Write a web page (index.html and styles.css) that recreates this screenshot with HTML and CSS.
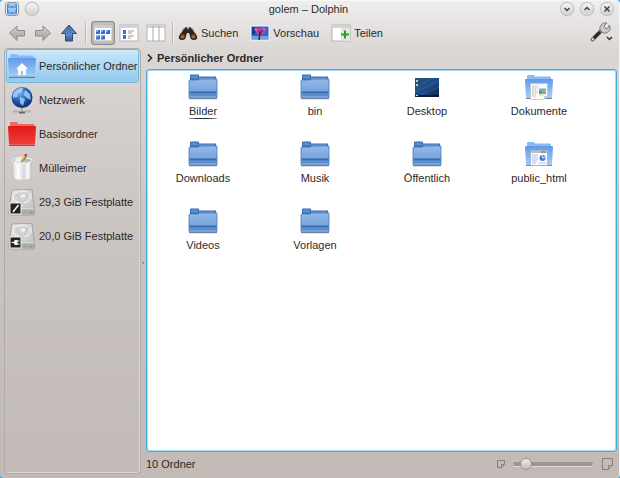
FILE: index.html
```html
<!DOCTYPE html>
<html lang="de">
<head>
<meta charset="utf-8">
<title>golem – Dolphin</title>
<link rel="stylesheet" href="styles.css">
</head>
<body>
<svg class="defs" aria-hidden="true">
  <defs>
    <linearGradient id="gFolder" x1="0" y1="0" x2="0" y2="1"><stop offset="0" stop-color="#92b9e8"/><stop offset="1" stop-color="#6b9ad8"/></linearGradient>
    <linearGradient id="gOpen" x1="0" y1="0" x2="0" y2="1"><stop offset="0" stop-color="#5f9aea"/><stop offset="1" stop-color="#a8ccf8"/></linearGradient>
    <linearGradient id="gRed" x1="0" y1="0" x2="0" y2="1"><stop offset="0" stop-color="#e01818"/><stop offset="1" stop-color="#f43c3c"/></linearGradient>
    <linearGradient id="gDesk" x1="0" y1="0" x2="1" y2="1"><stop offset="0" stop-color="#2a5070"/><stop offset=".5" stop-color="#1d4a86"/><stop offset="1" stop-color="#102848"/></linearGradient>
    <linearGradient id="gGrey" x1="0" y1="0" x2="0" y2="1"><stop offset="0" stop-color="#d2d0ce"/><stop offset="1" stop-color="#a3a19f"/></linearGradient>
    <linearGradient id="gUp" x1="0" y1="0" x2="0" y2="1"><stop offset="0" stop-color="#3e68a4"/><stop offset=".6" stop-color="#5f8ac4"/><stop offset="1" stop-color="#34588f"/></linearGradient>
    <linearGradient id="gCan" x1="0" y1="0" x2="1" y2="0"><stop offset="0" stop-color="#d4d4d4"/><stop offset=".3" stop-color="#fff"/><stop offset=".6" stop-color="#d6d7d8"/><stop offset=".8" stop-color="#fafafa"/><stop offset="1" stop-color="#c4c4c4"/></linearGradient>
    <linearGradient id="gDisk" x1="0" y1="0" x2="1" y2="1"><stop offset="0" stop-color="#e9e9e9"/><stop offset="1" stop-color="#bcbcbc"/></linearGradient>
    <radialGradient id="gGlobe" cx=".4" cy=".3" r=".7"><stop offset="0" stop-color="#7fb4ee"/><stop offset=".5" stop-color="#2863bb"/><stop offset="1" stop-color="#0b2c70"/></radialGradient>
  </defs>
  <symbol id="folder" viewBox="0 0 30 26">
    <path d="M1 24.500h28" stroke="#4c586c" stroke-width="1.500" opacity=".7"/>
    <path d="M2 1.500q0-1 1-1h7q1 0 1 1v1h16.500q.7 0 .7.700V8H2z" fill="#3868b2"/>
    <path d="M3 1.500h7v3H3z" fill="#5a8ed8"/>
    <path d="M11 3.500h16v1.500H11z" fill="#6d9cd6"/>
    <path d="M1 7q0-1 1-1h8l2-1h16q1 0 1 1v17q0 1-1 1H2q-1 0-1-1z" fill="url(#gFolder)" stroke="#4678b8" stroke-width=".8"/>
    <path d="M1.500 17.500h27v2h-27z" fill="#3668ac"/>
    <path d="M1.500 19.500h27v3h-27z" fill="#5b8dce"/>
    <path d="M2 23h26" stroke="#9abce9" stroke-width=".8"/>
  </symbol>
  <symbol id="folder-open" viewBox="0 0 30 26">
    <path d="M3 10V2q0-1 1-1h6l1 1.500h15q1 0 1 1V10z" fill="#8fbaf0"/>
    <path d="M1 6q0-1 1-1h26q1 0 1 1l-1 17q0 .7-1 .7H3q-1 0-1-.7z" fill="url(#gOpen)"/>
    <path d="M2 24.300h26" stroke="#536b90" stroke-width="1"/>
  </symbol>
  <symbol id="documents" viewBox="0 0 30 26">
    <use href="#folder-open" width="30" height="26"/>
    <path d="M6.500 9.500h17V22l-4 3.500h-13z" fill="#fbfbfa" stroke="#bbb" stroke-width=".6"/>
    <path d="M8 12h6M8 14h6M8 16h5M8 18h6M8 20h5M15 21h5M8 22h4" stroke="#b0b0b0" stroke-width=".8" stroke-dasharray="2 .5"/>
    <path d="M15 14.500h7v5h-7z" fill="#5eb0de"/><path d="M15 17.500h7v2h-7z" fill="#538b45"/><path d="M18 17h4v1.500h-4z" fill="#e7b23b"/>
    <path d="m19.500 25.500.5-3.500h3.500z" fill="#cfcfcf"/>
  </symbol>
  <symbol id="html" viewBox="0 0 30 26">
    <use href="#folder-open" width="30" height="26"/>
    <path d="M6.500 9.500h17v15h-17z" fill="#f7f9fb" stroke="#9cabb9" stroke-width=".7"/>
    <path d="M7 10h16v2H7z" fill="#b9c0c6"/><path d="M17 11h5" stroke="#555" stroke-width=".7"/>
    <path d="M8 14h6M8 16h5M8 18h6M8 20h5M8 22h4" stroke="#9ebbe8" stroke-width=".8"/>
    <circle cx="18.500" cy="17" r="3" fill="#3e82d8"/><path d="m18 14 .8 3 2.500-1" stroke="#e5f1ff" fill="none"/><path d="M15 22h7" stroke="#9ebbe8" stroke-width=".8"/>
  </symbol>
  <symbol id="desktop" viewBox="0 0 30 26">
    <path d="M3 4h24v19H3z" fill="url(#gDesk)"/><path d="m3 18 24-11M3 14 21 4M8 21 27 13" stroke="#4687c7" stroke-width="1" opacity=".35"/>
    <path d="M4 6h2v2H4zM4 10h2v2H4z" fill="#b5d4b4"/><path d="M3 21h24v2H3z" fill="#0c1c33"/><path d="M4 21.500h2" stroke="#bcdcf7"/>
  </symbol>
  <symbol id="disk" viewBox="0 0 28 28">
    <path d="m4 2 20-.5L26.500 21v5q0 1-1 1H2q-1 0-1-1v-5z" fill="url(#gDisk)" stroke="#999" stroke-width=".8"/>
    <path d="M1.500 21h25v5h-25z" fill="#aaa9a8"/><path d="M1.500 21h25" stroke="#eee" stroke-width=".7"/>
    <ellipse cx="14" cy="9" rx="9" ry="6" fill="#d6d6d6" stroke="#f8f8f8"/><path d="M8 6q4 5 6 10M20 4q-2 8-6 12" stroke="#bdbdbd" fill="none"/><ellipse cx="15" cy="8" rx="3" ry="2" fill="#f3f3f3" stroke="#bbb" stroke-width=".5"/>
    <path d="M22 24.500h2" stroke="#65a45b"/>
  </symbol>
</svg>

<div class="window">
  <header class="titlebar">
    <div class="title-side">
      <svg class="app-icon" viewBox="0 0 14 14"><rect x=".5" y=".5" width="13" height="13" rx="2" fill="#e5eef7" stroke="#969492"/><path d="M2.500 2v10M11.500 2v10" stroke="#3b84d0"/><path d="M3 1.500h8v5H3zM3 7.500h8v5H3z" fill="#5aa2e8"/><path d="M4.500 2.500h5v2h-5zM4.500 8.500h5v2h-5z" fill="#fff"/><path d="M5 4h4M5 10h4" stroke="#276dbd"/></svg>
      <button class="round" aria-label="Auf allen Arbeitsflächen"></button>
    </div>
    <h1 class="title">golem – Dolphin</h1>
    <div class="title-side title-end">
      <button class="round" aria-label="Minimieren"><svg viewBox="0 0 12 12"><path d="m3.500 5 2.500 2.500L8.500 5"/></svg></button>
      <button class="round" aria-label="Maximieren"><svg viewBox="0 0 12 12"><path d="M3.500 7 6 4.500 8.500 7"/></svg></button>
      <button class="round" aria-label="Schließen"><svg viewBox="0 0 12 12"><path d="m3.500 3.500 5 5m0-5-5 5"/></svg></button>
    </div>
  </header>

  <nav class="toolbar" aria-label="Werkzeugleiste">
    <button class="tool" aria-label="Zurück"><svg class="i18" viewBox="0 0 18 18"><path d="M1.500 9 9 2v4.500h7.500v5.500H9v4.500z" fill="url(#gGrey)" stroke="#8d8b89"/></svg></button>
    <button class="tool" aria-label="Vor"><svg class="i18" viewBox="0 0 18 18"><path d="M16.500 9 9 2v4.500H1.500v5.500H9v4.500z" fill="url(#gGrey)" stroke="#8d8b89"/></svg></button>
    <button class="tool" aria-label="Aufwärts"><svg class="i18" viewBox="0 0 18 18"><path d="M9 1 1.500 9.500h4V17h7V9.500h4z" fill="url(#gUp)" stroke="#294b80"/></svg></button>
    <span class="sep"></span>
    <button class="tool view active" aria-label="Symbole"><svg class="i20" viewBox="0 0 20 18"><rect x="1" y="1" width="18" height="16" fill="#fff" stroke="#b4b2b0"/><path d="M1 1h18v3H1z" fill="#cfcdcb"/><path d="M3 6h4v4H3zM8 6h4v4H8zM13 6h4v4h-4zM3 11.500h4v4H3zM8 11.500h4v4H8z" fill="#2f6fd2"/><path d="M3 6h2v2H3zM8 6h2v2H8zM13 6h2v2h-2zM3 11.500h2v2H3zM8 11.500h2v2H8z" fill="#75aaf2"/></svg></button>
    <button class="tool view" aria-label="Kompakt"><svg class="i20" viewBox="0 0 20 18"><rect x="1" y="1" width="18" height="16" fill="#fff" stroke="#b4b2b0"/><path d="M1 1h18v3H1z" fill="#d5d3d1"/><path d="M4 6h3v4H4zM4 11h3v4H4z" fill="#2f73d8"/><path d="M9 7h6M9 9h4M9 12h6M9 14h3" stroke="#999"/></svg></button>
    <button class="tool view" aria-label="Spalten"><svg class="i20" viewBox="0 0 20 18"><rect x="1" y="1" width="18" height="16" fill="#fff" stroke="#b4b2b0"/><path d="M1 1h18v3H1z" fill="#d5d3d1"/><path d="M7 2v15M13 2v15" stroke="#aaa"/></svg></button>
    <span class="sep"></span>
    <button class="tool text"><svg class="i20" viewBox="0 0 20 18"><path d="m6 4 3-1 1 3 1-3 3 1 5 8q1 4-3 4t-4-4l-1-3H9l-1 3q0 4-4 4t-3-4z" fill="#2b2725"/><path d="m5 6 2-2M15 6l-2-2M3 9l2-2M17 9l-2-2" stroke="#8b8785"/><circle cx="4.500" cy="12.500" r="2.300" fill="#8c4c18"/><circle cx="15.500" cy="12.500" r="2.300" fill="#8c4c18"/><path d="M3.500 13h2M14.500 13h2" stroke="#df8c32"/></svg>Suchen</button>
    <button class="tool text"><svg class="i20" viewBox="0 0 20 18"><rect x="1" y="2" width="18" height="14" fill="#2667c8" stroke="#f8f8f8"/><path d="M2 12h16v3H2z" fill="#69a3e8"/><path d="M2 3h5l-2 7-3 1z" fill="#123a8b"/><path d="M4 4q3-2 6 1 4-3 6 0-1 5-5 7Q6 10 4 4z" fill="#c9408f"/><path d="m7 5 3 2 4-2-3 6z" fill="#7a2aa0"/><path d="m10 8-1 8" stroke="#342b3b" stroke-width="1.500"/><path d="M13 5h2M5 6h2" stroke="#f59bbd"/></svg>Vorschau</button>
    <button class="tool text"><svg class="i20" viewBox="0 0 20 18"><rect x="1" y="1" width="18" height="16" fill="#fff" stroke="#b4b2b0"/><path d="M1 1h18v3H1z" fill="#d5d3d1"/><path d="M10 4h9v13h-9z" fill="#e5e4e3"/><path d="M14 6.500v8M10 10.500h8" stroke="#24a31c" stroke-width="2"/></svg>Teilen</button>
    <button class="tool settings" aria-label="Einstellungen"><svg class="wrench" viewBox="0 0 24 22"><path d="m2.500 17.500 9-9" stroke="#777" stroke-width="4" stroke-linecap="round"/><path d="m4 16 6-6" stroke="#262626" stroke-width="3"/><path d="M10 8q-1-5 4-7h3l-3 3 2 3 3-2v-2q3 4-1 7-3 2-5 1z" fill="#c9c9c9" stroke="#696969" stroke-width=".8"/><circle cx="2.800" cy="17.200" r="1" fill="#eee"/><path d="m17 15 2.500 2.500L22 15" fill="none" stroke="#333" stroke-width="1.500"/></svg></button>
  </nav>

  <div class="content">
    <aside class="places">
      <button class="place selected"><span class="place-icon"><svg class="pfolder" viewBox="0 0 30 26"><use href="#folder-open" width="30" height="26"/><path d="m9 16 6-6 6 6h-2v6h-3v-4h-2v4h-3v-6z" fill="#fff"/></svg></span>Persönlicher Ordner</button>
      <button class="place"><span class="place-icon"><svg class="i28" viewBox="0 0 28 28"><circle cx="14" cy="11.500" r="10.500" fill="url(#gGlobe)"/><path d="M7 5q5-4 8-3l-1 4-4 1-1 4-4 1q-1-4 2-7M12 11l5 2-2 7-3-3zM17 4l5 4 1 6-4-2-3-3z" fill="#b7dcf7" opacity=".75"/><path d="M14 22v3M5 25.500h6M17 25.500h6" stroke="#aeb0b0" stroke-width="2"/><path d="M11 26.500h6" stroke="#666" stroke-width="2"/></svg></span>Netzwerk</button>
      <button class="place"><span class="place-icon"><svg class="pfolder" viewBox="0 0 30 26"><path d="M3 8V2q0-1 1-1h6l1 2h16v5z" fill="#ef6666"/><path d="M1 6q0-1 1-1h26q1 0 1 1l-1 17q0 .7-1 .7H3q-1 0-1-.7z" fill="url(#gRed)"/><path d="M2 24.500h26" stroke="#8f5454"/></svg></span>Basisordner</button>
      <button class="place"><span class="place-icon"><svg class="i28" viewBox="0 0 28 28"><path d="M4 6h20l-1.500 19q-8.500 3-17 0z" fill="url(#gCan)" stroke="#b9b9b9" stroke-width=".6"/><ellipse cx="14" cy="6.500" rx="10" ry="3" fill="#b9b9b9" stroke="#f8f8f8"/><path d="M6 7q3-4 7-3l4 4q-6 2-11-1" fill="#eee"/><path d="m13 8 5-7" stroke="#ddb12c" stroke-width="2"/><path d="m17 2 1.500-2" stroke="#bd3228" stroke-width="2"/><path d="m14 8 5-6" stroke="#553a20" stroke-width=".7"/></svg></span>Mülleimer</button>
      <button class="place"><span class="place-icon"><svg class="i28" viewBox="0 0 28 28"><use href="#disk" width="28" height="28"/><rect x="2" y="15" width="11" height="11" fill="#222" stroke="#eee"/><path d="m5 24 5.500-7" stroke="#fff" stroke-width="1.500"/></svg></span>29,3 GiB Festplatte</button>
      <button class="place"><span class="place-icon"><svg class="i28" viewBox="0 0 28 28"><use href="#disk" width="28" height="28"/><rect x="2" y="15" width="11" height="11" fill="#222" stroke="#eee"/><path d="M3.500 20.500h2M9 19h2.500M9 22h2.500" stroke="#fff"/><path d="M5 20.500 7 18h2.500v5H7z" fill="#fff"/></svg></span>20,0 GiB Festplatte</button>
    </aside>
    <div class="splitter"></div>
    <main class="main">
      <div class="crumbs"><svg class="chev" viewBox="0 0 6 10"><path d="m1 1.500 3.500 3.500L1 8.500" fill="none" stroke="#222" stroke-width="1.500"/></svg><a href="#">Persönlicher Ordner</a></div>
      <section class="files">
        <a class="file current" href="#"><svg><use href="#folder"/></svg><span>Bilder</span></a>
        <a class="file" href="#"><svg><use href="#folder"/></svg><span>bin</span></a>
        <a class="file" href="#"><svg><use href="#desktop"/></svg><span>Desktop</span></a>
        <a class="file" href="#"><svg><use href="#documents"/></svg><span>Dokumente</span></a>
        <a class="file" href="#"><svg><use href="#folder"/></svg><span>Downloads</span></a>
        <a class="file" href="#"><svg><use href="#folder"/></svg><span>Musik</span></a>
        <a class="file" href="#"><svg><use href="#folder"/></svg><span>Öffentlich</span></a>
        <a class="file" href="#"><svg><use href="#html"/></svg><span>public_html</span></a>
        <a class="file" href="#"><svg><use href="#folder"/></svg><span>Videos</span></a>
        <a class="file" href="#"><svg><use href="#folder"/></svg><span>Vorlagen</span></a>
      </section>
      <footer class="status">
        <span class="count">10 Ordner</span>
        <svg class="page-small" viewBox="0 0 8 8"><path d="M.5.5h7v4l-3 3h-4zM4.500 7.500v-3h3" fill="none" stroke="#85807c"/></svg>
        <input class="zoom" type="range" min="0" max="100" value="10" aria-label="Symbolgröße">
        <svg class="page-large" viewBox="0 0 11 12"><path d="M.5.5h10v7l-4 4h-6zM6.500 11.500v-4h4" fill="none" stroke="#85807c"/></svg>
      </footer>
    </main>
  </div>
</div>
</body>
</html>
```

FILE: styles.css
```css
* { box-sizing: border-box; }
body {
  margin: 0;
  background: #4d9fd0;
  color: #2b2a29;
  font: 11px/14px "Liberation Sans", Arial, sans-serif;
}
button {
  margin: 0;
  padding: 0;
  border: 0;
  background: none;
  color: inherit;
  font: inherit;
}
a { color: inherit; text-decoration: none; }
svg { display: block; flex: none; }
.defs { position: absolute; width: 0; height: 0; }

.window {
  display: flex;
  flex-direction: column;
  min-height: 100vh;
  padding: 0 2px 2px 4px;
  border: 1px solid #f7f6f6;
  border-width: 1px 1px 0 0;
  border-radius: 4px;
  background: linear-gradient(#efeeed, #dad6d4 50px, #cbc5c2 220px, #c1bab6);
}

.titlebar { display: flex; align-items: center; height: 16px; }
.title-side { display: flex; flex: 1; align-items: center; gap: 7px; padding-left: 1px; }
.title-end { justify-content: flex-end; gap: 8px; padding-right: 4px; }
.title { margin: 0; font: inherit; }
.app-icon { width: 14px; height: 14px; }
.round {
  width: 12px;
  height: 12px;
  border-radius: 50%;
  background: linear-gradient(#f6f5f5, #d2d0ce);
  box-shadow: 0 0 1px 1px #b9b6b4;
}
.round svg { width: 12px; height: 12px; fill: none; stroke: #444; stroke-width: 1.5; }

.toolbar { display: flex; align-items: center; height: 31px; padding-right: 2px; }
.tool { display: flex; align-items: center; justify-content: center; width: 26px; height: 24px; }
.tool.view { width: 27px; }
.tool.active {
  width: 24px;
  border: 1px solid #8f8b88;
  border-radius: 3px;
  background: #c9c5c2;
  box-shadow: inset 0 0 2px #8f8b88;
}
.tool.text { width: auto; gap: 3px; margin-right: 12px; }
.tool.settings { margin-left: auto; }
.i18 { width: 18px; height: 18px; }
.i20 { width: 20px; height: 18px; }
.i28 { width: 28px; height: 28px; }
.wrench { width: 24px; height: 22px; }
.sep {
  width: 2px;
  height: 22px;
  margin: 0 4px 0 3px;
  border-left: 1px solid #bab6b3;
  border-right: 1px solid #f1efee;
}

.content { display: flex; flex: 1; }
.places {
  width: 137px;
  margin-bottom: 2px;
  padding: 0 1px;
  border: 1px solid #b1aba7;
  border-radius: 4px;
  box-shadow: inset -1px -1px 0 #dcd8d5;
}
.place {
  display: flex;
  align-items: center;
  gap: 3px;
  width: 100%;
  height: 34px;
  padding-left: 1px;
  border: 1px solid transparent;
  border-radius: 3px;
  white-space: nowrap;
}
.place.selected {
  border-color: #73b6dc;
  background: linear-gradient(#c8e8fc, #92c8ec);
  box-shadow: inset 0 0 1px #fff;
}
.place-icon { display: flex; justify-content: center; width: 28px; }
.pfolder { width: 30px; height: 26px; }

.splitter {
  width: 5px;
  background: radial-gradient(circle, #8d8783 1px, transparent 1px) center / 3px 3px no-repeat;
}

.main { display: flex; flex: 1; flex-direction: column; min-width: 0; }
.crumbs { display: flex; align-items: center; gap: 4px; height: 21px; padding: 0 0 2px 1px; font-weight: bold; }
.chev { width: 6px; height: 10px; }
.files {
  display: grid;
  flex: 1;
  grid-template-columns: repeat(auto-fill, 112px);
  grid-auto-rows: 67px;
  align-content: start;
  border: 1px solid #46a9dc;
  border-radius: 3px;
  background: #fff;
  box-shadow: inset 0 0 1px 1px #9ed8f6;
  padding-top: 4px;
}
.file { display: flex; flex-direction: column; align-items: center; gap: 4px; }
.file svg { width: 30px; height: 26px; }
.current span {
  padding-bottom: 1px;
  background: linear-gradient(90deg, #aaa, #333 30%, #333 70%, #aaa) bottom / 100% 1px no-repeat;
}

.status { display: flex; align-items: center; height: 24px; padding-right: 4px; }
.count { flex: 1; }
.page-small { width: 8px; height: 8px; }
.page-large { width: 11px; height: 12px; }
.zoom {
  width: 80px;
  height: 14px;
  margin: 0 9px 0 8px;
  appearance: none;
  background: none;
}
.zoom::-webkit-slider-runnable-track {
  height: 4px;
  border-radius: 2px;
  background: #9c9591;
  box-shadow: 0 1px 0 #dedad8;
}
.zoom::-webkit-slider-thumb {
  width: 12px;
  height: 12px;
  margin-top: -4px;
  appearance: none;
  border: 1px solid #96918e;
  border-radius: 50%;
  background: linear-gradient(#eceae9, #c5c0bd);
}
```
